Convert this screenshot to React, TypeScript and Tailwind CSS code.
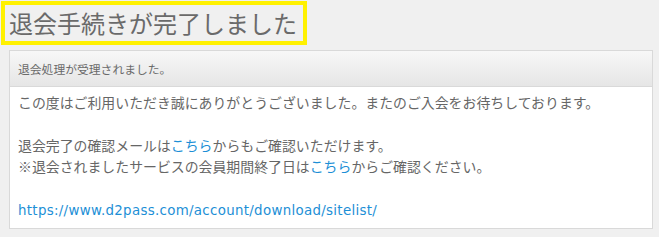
export default function App() {
  return (
    <div className="w-[659px] h-[237px] bg-[#f0f0f0] overflow-hidden font-['Noto_Sans_CJK_JP','Noto_Sans',sans-serif] text-[#666]">
      {/* Title */}
      <div className="pt-[1px] pl-[1px]">
        <h1 className="inline-block border-4 border-[#fff100] pl-[4px] pr-[6px] h-[44px] leading-[36px] text-[24px] font-normal text-[#6a6a6a]">
          退会手続きが完了しました
        </h1>
      </div>

      {/* Panel */}
      <div className="ml-[9px] mr-[6px] mt-[5px] border border-[#d9d9d9] bg-white">
        <div className="h-[36px] flex items-center pl-[8px] bg-gradient-to-b from-[#f7f7f7] to-[#e6e6e6] border-b border-[#d9d9d9] text-[11.8px] text-[#6a6a6a]">
          退会処理が受理されました。
        </div>
        <div className="pl-[8px] pt-[5px] pb-[7px] text-[13.9px] leading-[21.4px]">
          <p>この度はご利用いただき誠にありがとうございました。またのご入会をお待ちしております。</p>
          <p className="h-[21.4px]" />
          <p>
            退会完了の確認メールは<a href="#" className="text-[#1d8fd6]">こちら</a>からもご確認いただけます。
          </p>
          <p>
            ※退会されましたサービスの会員期間終了日は<a href="#" className="text-[#1d8fd6]">こちら</a>からご確認ください。
          </p>
          <p className="h-[21.4px]" />
          <p>
            <a href="#" className="text-[#1d8fd6] text-[13.4px] tracking-[0.3px] font-['DejaVu_Sans',sans-serif]">https://www.d2pass.com/account/download/sitelist/</a>
          </p>
        </div>
      </div>
    </div>
  );
}
